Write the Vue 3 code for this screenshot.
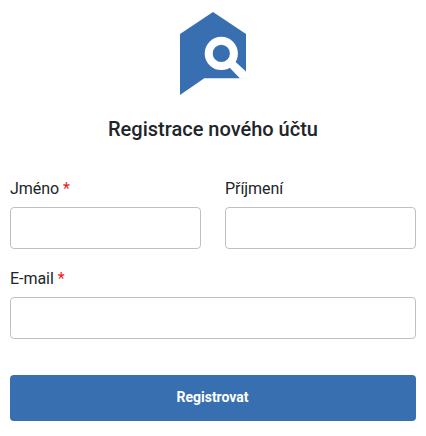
<script setup>
import { reactive } from 'vue'

const form = reactive({ firstName: '', lastName: '', email: '' })

const fields = [
  { key: 'firstName', label: 'Jméno', type: 'text', required: true, wide: false },
  { key: 'lastName', label: 'Příjmení', type: 'text', required: false, wide: false },
  { key: 'email', label: 'E-mail', type: 'email', required: true, wide: true },
]
</script>

<template>
  <main class="page">
    <svg class="logo" width="66" height="83" viewBox="0 0 66 83" aria-hidden="true">
      <path class="house" d="M0 22 33 0 66 22V66.3H24.3L0 83Z" />
      <path class="cut" d="M48 54 60.3 66.8H67V60.4L54 48.6Z" />
      <circle class="lens" cx="41.3" cy="41.4" r="12.6" />
    </svg>
    <h1 class="title">Registrace nového účtu</h1>
    <form class="form" @submit.prevent>
      <div v-for="f in fields" :key="f.key" class="field" :class="{ wide: f.wide }">
        <label class="label" :for="f.key">{{ f.label }} <span v-if="f.required" class="star">*</span></label>
        <input :id="f.key" v-model="form[f.key]" class="input" :type="f.type" />
      </div>
      <button class="submit wide" type="submit">Registrovat</button>
    </form>
  </main>
</template>

<style>
body {
  background: #fff;
}
</style>

<style scoped>
.page {
  display: flex;
  flex-direction: column;
  align-items: center;
  box-sizing: border-box;
  height: 436px;
  padding: 12px 10px 0;
  font-family: Roboto, "Liberation Sans", sans-serif;
  color: #212529;
}
.logo {
  display: block;
}
.house {
  fill: #386fb1;
}
.cut {
  fill: #fff;
}
.lens {
  fill: #386fb1;
  stroke: #fff;
  stroke-width: 8;
}
.title {
  margin: 22px 0 0;
  font-size: 20px;
  font-weight: 500;
  line-height: 24px;
}
.form {
  display: grid;
  grid-template-columns: 191px 191px;
  column-gap: 24px;
  row-gap: 17px;
  width: 406px;
  margin-top: 35px;
}
.wide {
  grid-column: 1 / -1;
}
.field {
  display: flex;
  flex-direction: column;
}
.label {
  height: 31px;
  font-size: 16px;
  line-height: 26px;
  letter-spacing: -0.05px;
}
.star {
  color: #f5151a;
}
.input {
  box-sizing: border-box;
  width: 100%;
  height: 42px;
  padding: 8px 12px;
  border: 1px solid #bfc0c2;
  border-radius: 4px;
  background: #fff;
  font: inherit;
}
.submit {
  height: 46px;
  margin-top: 19px;
  padding: 0 1px 2px 0;
  border: 0;
  border-radius: 4px;
  background: #386fb1;
  color: #fff;
  font-family: inherit;
  font-size: 14px;
  font-weight: 700;
}
</style>
